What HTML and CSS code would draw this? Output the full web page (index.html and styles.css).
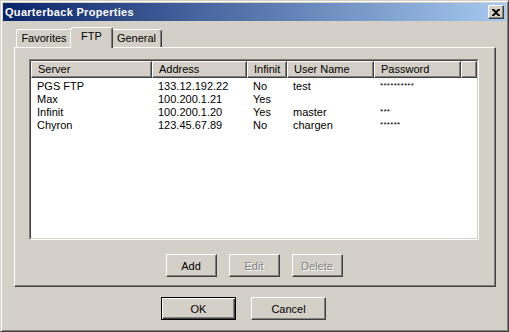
FILE: index.html
```html
<!DOCTYPE html>
<html lang="en">
<head>
  <meta charset="UTF-8">
  <meta name="viewport" content="width=device-width, initial-scale=1.0">
  <title>Quarterback Properties</title>
  <link rel="stylesheet" href="styles.css">
</head>
<body>
  <div class="window">
    <div class="titlebar">
      <span class="title">Quarterback Properties</span>
      <button class="close" aria-label="Close">
        <svg width="8" height="7" viewBox="0 0 8 7">
          <path d="M0 0h2l2 2 2-2h2v1L5 3.5 8 6v1H6L4 5 2 7H0V6l3-2.5L0 1z" fill="#000"/>
        </svg>
      </button>
    </div>

    <div class="content">
      <div class="tabs">
        <div class="tab tab-favorites">Favorites</div>
        <div class="tab tab-ftp active">FTP</div>
        <div class="tab tab-general">General</div>
      </div>

      <div class="panel">
        <div class="list">
          <div class="list-inner">
            <div class="list-head">
              <div class="head-cell">Server</div>
              <div class="head-cell">Address</div>
              <div class="head-cell">Infinit</div>
              <div class="head-cell">User Name</div>
              <div class="head-cell">Password</div>
              <div class="head-cell"></div>
            </div>
            <div class="list-rows">
              <div class="list-row">
                <span>PGS FTP</span><span>133.12.192.22</span><span>No</span><span>test</span><span class="pw">**********</span>
              </div>
              <div class="list-row">
                <span>Max</span><span>100.200.1.21</span><span>Yes</span><span></span><span class="pw"></span>
              </div>
              <div class="list-row">
                <span>Infinit</span><span>100.200.1.20</span><span>Yes</span><span>master</span><span class="pw">***</span>
              </div>
              <div class="list-row">
                <span>Chyron</span><span>123.45.67.89</span><span>No</span><span>chargen</span><span class="pw">******</span>
              </div>
            </div>
          </div>
        </div>

        <div class="panel-buttons">
          <button class="btn small">Add</button>
          <button class="btn small" disabled>Edit</button>
          <button class="btn small" disabled>Delete</button>
        </div>
      </div>

      <div class="dialog-buttons">
        <button class="btn wide default">OK</button>
        <button class="btn wide">Cancel</button>
      </div>
    </div>
  </div>
</body>
</html>
```

FILE: styles.css
```css
* {
  box-sizing: border-box;
}

body {
  margin: 0;
  font-family: "Liberation Sans", Arial, sans-serif;
  font-size: 11px;
  color: #000;
  background-color: #d4d0c8;
}

.window {
  width: 509px;
  height: 332px;
  padding: 2px;
  background-color: #d4d0c8;
  border: 1px solid;
  border-color: #d4d0c8 #404040 #404040 #d4d0c8;
  box-shadow: inset 1px 1px #fff, inset -1px -1px #808080;
}

.titlebar {
  height: 18px;
  display: flex;
  align-items: center;
  justify-content: space-between;
  padding: 0 2px 0 2px;
  background: linear-gradient(to right, #0a246a, #a6caf0);
}

.title {
  color: #fff;
  font-weight: bold;
  font-size: 11px;
  font-family: "Liberation Sans", Arial, sans-serif;
  letter-spacing: 0.3px;
}

.close {
  width: 16px;
  height: 14px;
  padding: 0;
  display: flex;
  align-items: center;
  justify-content: center;
  background-color: #d4d0c8;
  border: 1px solid;
  border-color: #fff #404040 #404040 #fff;
  box-shadow: inset -1px -1px #808080;
}

.content {
  padding: 6px 10px 0 11px;
}

.tabs {
  display: flex;
  align-items: flex-end;
  height: 20px;
  padding-left: 2px;
}

.tab {
  height: 18px;
  line-height: 16px;
  text-align: center;
  background-color: #d4d0c8;
  border: 1px solid;
  border-bottom: none;
  border-color: #fff #404040 #404040 #fff;
  border-radius: 3px 3px 0 0;
  box-shadow: inset -1px 0 #808080;
}

.tab-favorites {
  width: 56px;
}

.tab-ftp {
  width: 39px;
}

.tab-general {
  width: 51px;
}

.tab.active {
  position: relative;
  z-index: 1;
  width: 43px;
  height: 21px;
  line-height: 16px;
  margin: 0 -2px -1px;
}

.panel {
  height: 240px;
  padding: 11px 16px 0 14px;
  border: 1px solid;
  border-color: #fff #404040 #404040 #fff;
  box-shadow: inset -1px -1px #808080;
}

.list {
  height: 181px;
  border: 1px solid;
  border-color: #808080 #fff #fff #808080;
}

.list-inner {
  height: 100%;
  background-color: #fff;
  border: 1px solid;
  border-color: #404040 #d4d0c8 #d4d0c8 #404040;
}

.list-head,
.list-row {
  display: grid;
  grid-template-columns: 121px 95px 40px 87px 87px 1fr;
}

.head-cell {
  height: 17px;
  line-height: 15px;
  padding-left: 6px;
  white-space: nowrap;
  overflow: hidden;
  background-color: #d4d0c8;
  border: 1px solid;
  border-color: #fff #404040 #404040 #fff;
  box-shadow: inset -1px -1px #808080;
}

.list-rows {
  padding-top: 2px;
}

.list-row span {
  height: 13px;
  line-height: 13px;
  padding-left: 6px;
  white-space: nowrap;
}

.list-row .pw {
  font-size: 8px;
  letter-spacing: 0.3px;
  line-height: 11px;
}

.panel-buttons {
  display: flex;
  justify-content: center;
  gap: 12px;
  margin-top: 14px;
}

.dialog-buttons {
  display: flex;
  gap: 15px;
  margin-top: 10px;
  padding-left: 147px;
}

.btn {
  height: 23px;
  padding: 0;
  font-family: "Liberation Sans", Arial, sans-serif;
  font-size: 11px;
  color: #000;
  background-color: #d4d0c8;
  border: 1px solid;
  border-color: #fff #404040 #404040 #fff;
  box-shadow: inset -1px -1px #808080;
}

.btn.small {
  width: 51px;
}

.btn.wide {
  width: 75px;
}

.btn.default {
  border-color: #000;
  box-shadow: inset 1px 1px #fff, inset -1px -1px #404040, inset -2px -2px #808080;
}

.btn:disabled {
  color: #808080;
  text-shadow: 1px 1px #fff;
}
```
